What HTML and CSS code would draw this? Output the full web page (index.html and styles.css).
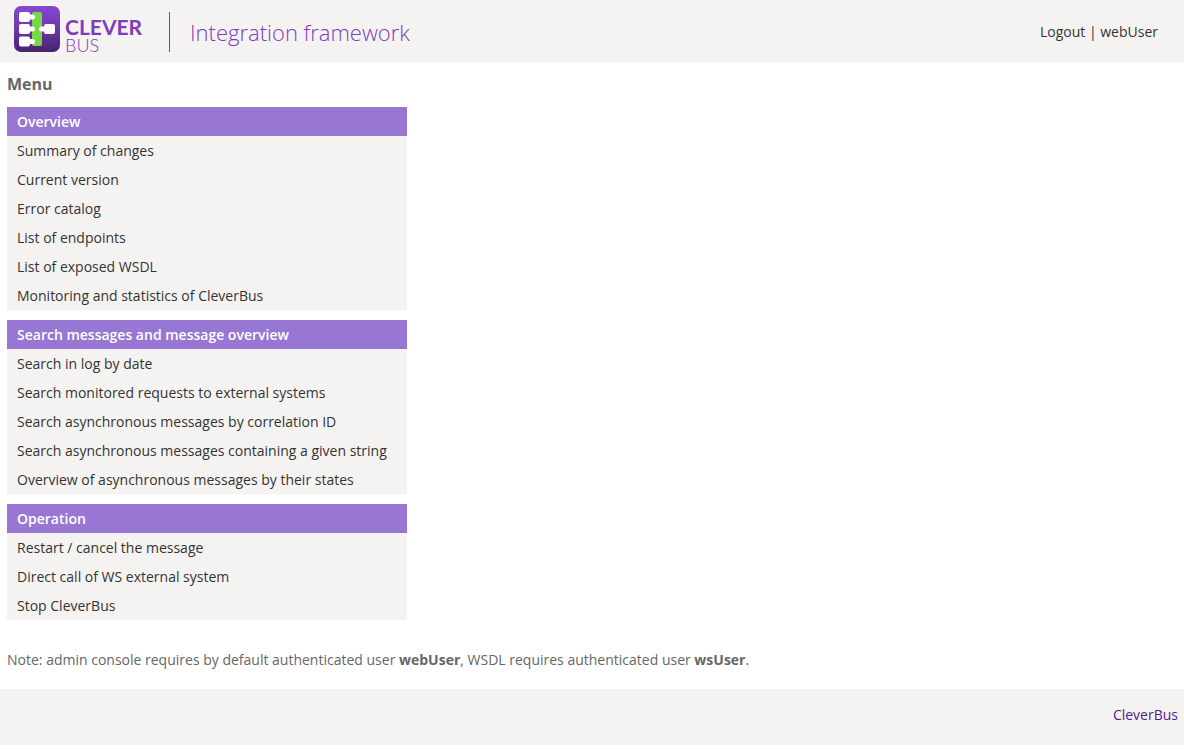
FILE: index.html
```html
<!DOCTYPE html>
<html lang="en">
<head>
<meta charset="utf-8">
<title>CleverBus – Integration framework</title>
<link rel="stylesheet" href="styles.css">
</head>
<body>
<header class="header">
  <a class="logo" href="#" aria-label="CleverBus">
    <svg class="logo-mark" viewBox="0 0 46 46" aria-hidden="true">
      <defs>
        <linearGradient id="mark" x1="0" y1="0" x2="0" y2="1">
          <stop offset="0" stop-color="#8747cf"/>
          <stop offset="0.45" stop-color="#7038b0"/>
          <stop offset="1" stop-color="#46236c"/>
        </linearGradient>
      </defs>
      <rect width="46" height="46" rx="7" fill="url(#mark)"/>
      <rect x="18" y="6" width="10" height="34" rx="2" fill="#78d64b"/>
      <g fill="#fff">
        <rect x="5" y="6" width="11" height="10" rx="2"/>
        <rect x="13" y="8.500" width="8" height="5" rx="2.500"/>
        <rect x="5" y="18" width="11" height="10" rx="2"/>
        <rect x="13" y="20.500" width="8" height="5" rx="2.500"/>
        <rect x="5" y="30.500" width="11" height="10" rx="2"/>
        <rect x="13" y="33" width="8" height="5" rx="2.500"/>
        <rect x="30" y="18" width="11" height="10" rx="2"/>
        <rect x="25" y="20.500" width="8" height="5" rx="2.500"/>
      </g>
    </svg>
    <span class="logo-text"><span class="logo-clever">CLEVER</span><span class="logo-bus">BUS</span></span>
  </a>
  <h1 class="title">Integration framework</h1>
  <nav class="account"><a href="#">Logout</a> | <span>webUser</span></nav>
</header>
<main class="content">
  <h2 class="heading">Menu</h2>
  <nav class="menu">
    <section>
      <h3 class="menu-title">Overview</h3>
      <ul class="menu-list">
        <li><a href="#">Summary of changes</a></li>
        <li><a href="#">Current version</a></li>
        <li><a href="#">Error catalog</a></li>
        <li><a href="#">List of endpoints</a></li>
        <li><a href="#">List of exposed WSDL</a></li>
        <li><a href="#">Monitoring and statistics of CleverBus</a></li>
      </ul>
    </section>
    <section>
      <h3 class="menu-title">Search messages and message overview</h3>
      <ul class="menu-list">
        <li><a href="#">Search in log by date</a></li>
        <li><a href="#">Search monitored requests to external systems</a></li>
        <li><a href="#">Search asynchronous messages by correlation ID</a></li>
        <li><a href="#">Search asynchronous messages containing a given string</a></li>
        <li><a href="#">Overview of asynchronous messages by their states</a></li>
      </ul>
    </section>
    <section>
      <h3 class="menu-title">Operation</h3>
      <ul class="menu-list">
        <li><a href="#">Restart / cancel the message</a></li>
        <li><a href="#">Direct call of WS external system</a></li>
        <li><a href="#">Stop CleverBus</a></li>
      </ul>
    </section>
  </nav>
  <p class="note">Note: admin console requires by default authenticated user <strong>webUser</strong>, WSDL requires authenticated user <strong>wsUser</strong>.</p>
</main>
<footer class="footer"><a href="#">CleverBus</a></footer>
</body>
</html>
```

FILE: styles.css
```css
* { box-sizing: border-box; }

body {
  margin: 0;
  background: #fff;
  color: #666;
  font-family: "Open Sans", "Noto Sans", sans-serif;
  font-size: 14px;
  line-height: 19px;
}

h1, h2, h3, p, ul { margin: 0; padding: 0; }
a { text-decoration: none; }

.header {
  display: flex;
  align-items: center;
  padding: 6px 26px 5px 14px;
  background: #f5f3f2;
}

.logo {
  display: flex;
  align-items: flex-start;
  gap: 5px;
  height: 51px;
  padding-right: 27px;
  color: #7d3cbd;
}

.logo-mark { width: 46px; height: 46px; }

.logo-text {
  display: flex;
  flex-direction: column;
  padding-top: 11px;
  font-family: Lato, sans-serif;
}

.logo-clever {
  font-size: 21px;
  font-weight: 700;
  line-height: 19px;
}

.logo-bus {
  font-size: 18px;
  font-weight: 300;
  line-height: 18px;
}

.title {
  padding-left: 20px;
  border-left: 1px solid #7d3cbd;
  color: #7d3cbd;
  font-size: 22px;
  font-weight: 300;
  line-height: 40px;
}

.account {
  margin-left: auto;
  color: #333;
}

.account a { color: #333; }

.content { padding: 12px 7px 20px; }

.heading {
  font-size: 16px;
  font-weight: 700;
  line-height: 20px;
}

.menu {
  display: flex;
  flex-direction: column;
  gap: 10px;
  max-width: 400px;
  padding: 13px 0 30px;
}

.menu-title {
  padding: 5px 10px;
  background: #9777d3;
  color: #fff;
  font-size: 14px;
  font-weight: 600;
}

.menu-list {
  background: #f5f3f2;
  list-style: none;
}

.menu-list a {
  display: block;
  padding: 5px 10px;
  color: #333;
}

.footer {
  display: flex;
  justify-content: flex-end;
  padding: 16px 6px 21px;
  background: #f5f3f2;
}

.footer a { color: #551a8b; }
```
